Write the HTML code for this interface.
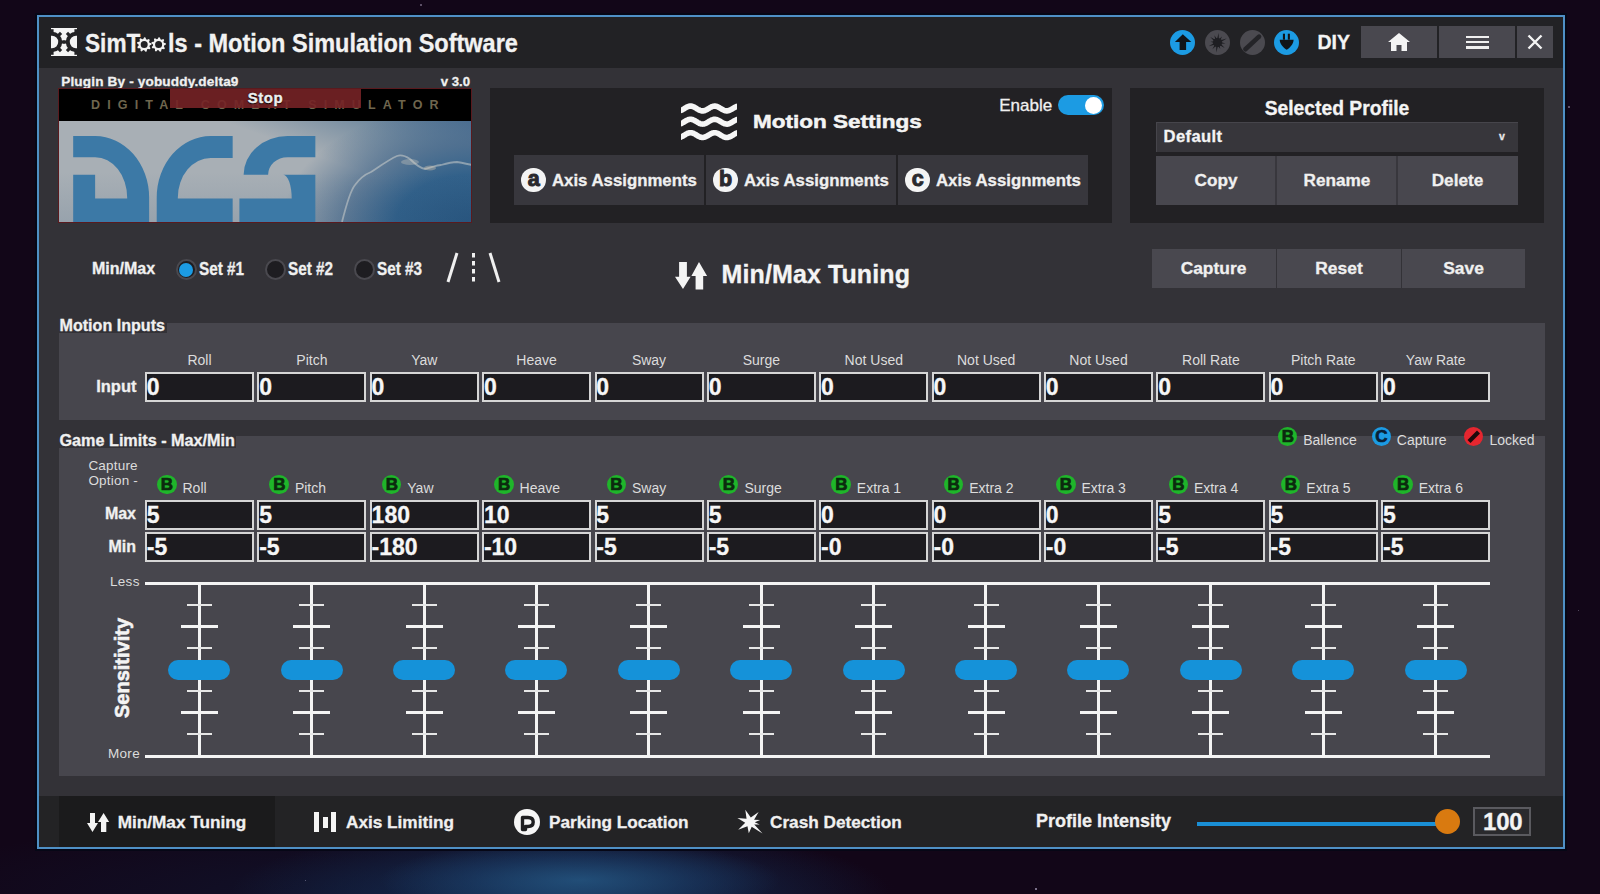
<!DOCTYPE html><html><head><meta charset="utf-8"><style>
html,body{margin:0;padding:0;width:1600px;height:894px;overflow:hidden;background:#120618;}
body{position:relative;font-family:"Liberation Sans",sans-serif;}
.t{position:absolute;white-space:nowrap;}
.b{-webkit-text-stroke:0.3px currentColor;}
.r{position:absolute;}
svg{position:absolute;overflow:visible;}
</style></head><body>
<div class="r" style="left:0;top:0;width:1600px;height:894px;background:radial-gradient(ellipse 200px 40px at 580px 880px,rgba(38,90,135,.75) 0%,rgba(30,70,115,.45) 55%,rgba(20,40,80,0) 100%),radial-gradient(ellipse 330px 70px at 560px 894px,rgba(22,52,88,.9) 0%,rgba(20,42,78,.6) 50%,rgba(16,12,36,0) 100%),radial-gradient(ellipse 500px 80px at 400px 894px,rgba(16,22,48,.8) 0%,rgba(16,12,36,0) 100%),#120618;"></div>
<div class="r" style="left:1568px;top:106px;width:1.5px;height:1.5px;border-radius:50%;background:rgba(220,210,240,0.44);"></div><div class="r" style="left:1035px;top:888px;width:1.5px;height:1.5px;border-radius:50%;background:rgba(220,210,240,0.62);"></div><div class="r" style="left:1578px;top:610px;width:1px;height:1px;border-radius:50%;background:rgba(220,210,240,0.42);"></div><div class="r" style="left:420px;top:4px;width:1.5px;height:1.5px;border-radius:50%;background:rgba(220,210,240,0.44);"></div><div class="r" style="left:305px;top:880px;width:1px;height:1px;border-radius:50%;background:rgba(220,210,240,0.45);"></div>
<div class="r" style="left:35px;top:13px;width:1532px;height:838px;background:#060716;"></div>
<div class="r" style="left:37px;top:15px;width:1528px;height:834px;background:#4f90c6;"></div>
<div class="r" style="left:39px;top:17px;width:1524px;height:830px;background:#333237;"></div>
<div class="r" style="left:39px;top:17px;width:1524px;height:51px;background:#222225;"></div>
<div class="r" style="left:39px;top:796px;width:1524px;height:51px;background:#232325;"></div>
<svg style="left:50.6px;top:28px" width="26" height="28" viewBox="0 0 26 28"><defs><clipPath id="lc"><rect x="0" y="0" width="26" height="28"/></clipPath></defs><g clip-path="url(#lc)"><rect x="0" y="0" width="26" height="28" fill="#f4f4f4"/><circle cx="1" cy="14" r="8.2" stroke="#222225" stroke-width="4" fill="none"/><circle cx="25" cy="14" r="8.2" stroke="#222225" stroke-width="4" fill="none"/><path d="M1.00 5.00 L1.00 1.20" stroke="#222225" stroke-width="3.2"/><path d="M7.36 7.64 L10.05 4.95" stroke="#222225" stroke-width="3.2"/><path d="M10.00 14.00 L13.80 14.00" stroke="#222225" stroke-width="3.2"/><path d="M7.36 20.36 L10.05 23.05" stroke="#222225" stroke-width="3.2"/><path d="M1.00 23.00 L1.00 26.80" stroke="#222225" stroke-width="3.2"/><path d="M25.00 23.00 L25.00 26.80" stroke="#222225" stroke-width="3.2"/><path d="M18.64 20.36 L15.95 23.05" stroke="#222225" stroke-width="3.2"/><path d="M16.00 14.00 L12.20 14.00" stroke="#222225" stroke-width="3.2"/><path d="M18.64 7.64 L15.95 4.95" stroke="#222225" stroke-width="3.2"/><path d="M25.00 5.00 L25.00 1.20" stroke="#222225" stroke-width="3.2"/></g></svg>
<div class="t b" style="left:84.5px;top:30.7px;font-size:25px;line-height:25px;font-weight:700;color:#f2f2f2;letter-spacing:0px;transform:scaleX(0.905);transform-origin:0 0;">SimT</div>
<svg style="left:130px;top:30px" width="50" height="30" viewBox="0 0 50 30"><path d="M14.20,7.30 L15.47,7.41 L16.12,9.34 L17.00,9.75 L18.89,9.01 L19.79,9.91 L19.05,11.80 L19.46,12.68 L21.39,13.33 L21.50,14.60 L19.71,15.57 L19.46,16.52 L20.52,18.25 L19.79,19.29 L17.80,18.89 L17.00,19.45 L16.70,21.46 L15.47,21.79 L14.20,20.20 L13.23,20.11 L11.70,21.46 L10.55,20.92 L10.60,18.89 L9.91,18.20 L7.88,18.25 L7.34,17.10 L8.69,15.57 L8.60,14.60 L7.01,13.33 L7.34,12.10 L9.35,11.80 L9.91,11.00 L9.51,9.01 L10.55,8.28 L12.28,9.34 L13.23,9.09 Z M17.70,14.60 A3.5,3.5 0 1 0 10.70,14.60 A3.5,3.5 0 1 0 17.70,14.60 Z" fill="#f2f2f2" fill-rule="evenodd"/><path d="M28.60,7.30 L29.87,7.41 L30.52,9.34 L31.40,9.75 L33.29,9.01 L34.19,9.91 L33.45,11.80 L33.86,12.68 L35.79,13.33 L35.90,14.60 L34.11,15.57 L33.86,16.52 L34.92,18.25 L34.19,19.29 L32.20,18.89 L31.40,19.45 L31.10,21.46 L29.87,21.79 L28.60,20.20 L27.63,20.11 L26.10,21.46 L24.95,20.92 L25.00,18.89 L24.31,18.20 L22.28,18.25 L21.74,17.10 L23.09,15.57 L23.00,14.60 L21.41,13.33 L21.74,12.10 L23.75,11.80 L24.31,11.00 L23.91,9.01 L24.95,8.28 L26.68,9.34 L27.63,9.09 Z M32.10,14.60 A3.5,3.5 0 1 0 25.10,14.60 A3.5,3.5 0 1 0 32.10,14.60 Z" fill="#f2f2f2" fill-rule="evenodd"/></svg>
<div class="t b" style="left:167.8px;top:30.7px;font-size:25px;line-height:25px;font-weight:700;color:#f2f2f2;letter-spacing:0px;transform:scaleX(0.940);transform-origin:0 0;">ls - Motion Simulation Software</div>
<svg style="left:1170.1px;top:29.700000000000003px" width="25" height="25" viewBox="0 0 25 25"><circle cx="12.5" cy="12.5" r="12.5" fill="#1c9be3"/><path d="M12.8 4.2 L21.3 12 H16.1 V19.9 H9.6 V12 H4.9 Z" fill="#101418"/></svg>
<svg style="left:1205.4px;top:29.6px" width="25" height="25" viewBox="0 0 25 25"><circle cx="12.5" cy="12.5" r="12.5" fill="#4b4a50"/><path d="M13.66,3.07 L13.85,9.16 L17.01,6.51 L15.34,10.28 L21.71,8.59 L16.06,12.00 L20.44,13.47 L15.84,13.85 L19.69,17.92 L14.72,15.34 L15.24,18.94 L13.00,16.06 L11.28,22.43 L11.15,15.84 L7.38,19.29 L9.66,14.72 L3.76,16.21 L8.94,13.00 L5.55,11.65 L9.16,11.15 L5.31,7.08 L10.28,9.66 L9.37,5.14 L12.00,8.94 Z" fill="#1e1e22"/><circle cx="12.5" cy="12.5" r="4.5" fill="#1e1e22"/></svg>
<svg style="left:1239.9px;top:29.700000000000003px" width="25" height="25" viewBox="0 0 25 25"><circle cx="12.5" cy="12.5" r="12.5" fill="#4b4a50"/><path d="M5.4 19.3 L19 6.6" stroke="#242428" stroke-width="4.6" stroke-linecap="round"/></svg>
<svg style="left:1274.4px;top:29.700000000000003px" width="25" height="25" viewBox="0 0 25 25"><circle cx="12.5" cy="12.5" r="12.5" fill="#1c9be3"/><rect x="8.9" y="3.7" width="2.1" height="6" fill="#101418"/><rect x="13.8" y="3.7" width="2.1" height="6" fill="#101418"/><path d="M5.7 9.7 H19.6 C19.6 14 16 17.5 12.7 19.8 C9.4 17.5 5.7 14 5.7 9.7 Z" fill="#101418"/></svg>
<div class="t b" style="left:1317.5px;top:33.0px;font-size:19.5px;line-height:19.5px;font-weight:700;color:#f4f4f4;letter-spacing:0px;">DIY</div>
<div class="r" style="left:1361px;top:26px;width:76px;height:32px;background:#49484f;"></div>
<div class="r" style="left:1439px;top:26px;width:76px;height:32px;background:#49484f;"></div>
<div class="r" style="left:1517px;top:26px;width:36px;height:32px;background:#49484f;"></div>
<svg style="left:1388px;top:33px" width="22" height="18" viewBox="0 0 22 18"><path d="M11 0 L22 9 L19 9 L19 18 L13.5 18 L13.5 12 L8.5 12 L8.5 18 L3 18 L3 9 L0 9 Z" fill="#f4f4f4"/></svg>
<div class="r" style="left:1466px;top:35.5px;width:23px;height:2.5px;background:#f0f0f0;"></div>
<div class="r" style="left:1466px;top:40.7px;width:23px;height:2.5px;background:#f0f0f0;"></div>
<div class="r" style="left:1466px;top:46px;width:23px;height:2.5px;background:#f0f0f0;"></div>
<svg style="left:1528px;top:35px" width="14" height="14" viewBox="0 0 14 14"><path d="M0.5 0.5 L13.5 13.5 M13.5 0.5 L0.5 13.5" stroke="#f4f4f4" stroke-width="2.4"/></svg>
<div class="t b" style="left:61.2px;top:74.7px;font-size:13.6px;line-height:13.6px;font-weight:700;color:#f0f0f0;letter-spacing:0.15px;">Plugin By - yobuddy.delta9</div>
<div class="t b" style="left:70.0px;width:400px;text-align:right;top:75.0px;font-size:13.2px;line-height:13.2px;font-weight:700;color:#f0f0f0;letter-spacing:0px;">v 3.0</div>
<div class="r" style="left:58px;top:88px;width:414px;height:135px;background:#000;overflow:hidden;">
<div class="r" style="left:0;top:33px;width:414px;height:102px;background:radial-gradient(ellipse 190px 120px at 414px 102px,#2a5780 0%,#32618a 40%,rgba(70,105,140,.75) 65%,rgba(150,165,178,0) 100%),linear-gradient(200deg,rgba(60,100,140,.85) 0%,rgba(80,115,145,.5) 18%,rgba(168,175,181,0) 36%),#a8afb5;"></div>
<div class="r" style="left:0;top:33px;width:414px;height:102px;background:linear-gradient(180deg,rgba(40,80,120,0) 0%,rgba(40,80,120,0) 50%,rgba(30,70,110,.12) 100%);"></div>
<svg style="left:0;top:33px" width="414" height="102" viewBox="0 0 414 102"><path d="M284 101 C288 85 292 70 297 64 C302 57 308 53 313 51 C322 45 332 38 339 35 C344 33 349 36 352 38 C357 43 362 47 367 48 C373 47 378 44 383 44 C390 42 395 41 399 41 C405 42 409 43 414 44" stroke="rgba(215,215,210,.5)" stroke-width="1.8" fill="none"/><ellipse cx="352" cy="41" rx="9" ry="3" fill="rgba(225,215,200,.3)"/><ellipse cx="372" cy="47" rx="6" ry="2.5" fill="rgba(225,205,180,.35)"/></svg>
<svg style="left:0;top:32px" width="270" height="104" viewBox="0 0 1600 616"><g fill="#3c79a6"><path d="M90,95 L220,95 A320,365 0 0 1 540,460 L540,640 L90,640 L90,325 L220,325 L220,465 L410,465 L410,460 A190,240 0 0 0 220,220 L90,220 Z"/><path d="M1035,95 L905,95 A320,365 0 0 0 585,460 L585,640 L1035,640 L1035,465 L710,465 L710,460 A195,235 0 0 1 905,225 L1035,225 Z"/><path d="M1525,95 L1360,95 A260,230 0 0 0 1100,325 L1245,325 A115,105 0 0 1 1360,220 L1525,220 Z"/><path d="M1335,325 L1525,325 L1525,640 L1075,640 L1075,465 L1385,465 A50,140 0 0 0 1335,325 Z"/></g></svg>
<div class="t" style="left:33px;top:10px;font-size:12.5px;line-height:14px;font-weight:700;color:#6f664e;letter-spacing:7.15px;">DIGITAL&#160;COMBAT&#160;SIMULATOR</div>
<div class="r" style="left:112px;top:1px;width:191px;height:18.5px;background:rgba(118,34,38,.9);"></div>
<div class="r" style="left:0;top:0;width:412px;height:133px;border:1px solid #5a1a1e;"></div>
</div>
<div class="t" style="left:65.5px;width:400px;text-align:center;top:89.6px;font-size:15px;line-height:15px;font-weight:700;color:#eeeeee;letter-spacing:0.6px;-webkit-text-stroke:0.4px #eee;text-shadow:0 0 1.5px #000,0 1px 1px #000;">Stop</div>
<div class="r" style="left:490px;top:88px;width:622px;height:135px;background:#222124;"></div>
<svg style="left:681px;top:100px" width="56" height="44" viewBox="0 0 56 44"><defs><clipPath id="wc"><rect x="0" y="0" width="56" height="44"/></clipPath></defs><g clip-path="url(#wc)" transform="translate(0,3)"><polyline points="-3.0,7.89 -2.0,7.87 -1.0,7.70 0.0,7.37 1.0,6.93 2.0,6.38 3.0,5.78 4.0,5.16 5.0,4.56 6.0,4.02 7.0,3.59 8.0,3.28 9.0,3.12 10.0,3.12 11.0,3.28 12.0,3.59 13.0,4.02 14.0,4.56 15.0,5.16 16.0,5.78 17.0,6.38 18.0,6.93 19.0,7.37 20.0,7.70 21.0,7.87 22.0,7.89 23.0,7.74 24.0,7.45 25.0,7.02 26.0,6.50 27.0,5.90 28.0,5.28 29.0,4.68 30.0,4.12 31.0,3.67 32.0,3.33 33.0,3.14 34.0,3.11 35.0,3.24 36.0,3.52 37.0,3.93 38.0,4.45 39.0,5.04 40.0,5.66 41.0,6.27 42.0,6.82 43.0,7.29 44.0,7.64 45.0,7.85 46.0,7.90 47.0,7.78 48.0,7.52 49.0,7.12 50.0,6.61 51.0,6.03 52.0,5.41 53.0,4.79 54.0,4.23 55.0,3.75 56.0,3.39 57.0,3.17 58.0,3.10 59.0,3.20" stroke="#f6f6f6" stroke-width="5.6" fill="none" stroke-linecap="butt" stroke-linejoin="round"/><polyline points="-3.0,21.09 -2.0,21.07 -1.0,20.90 0.0,20.57 1.0,20.13 2.0,19.58 3.0,18.98 4.0,18.36 5.0,17.76 6.0,17.22 7.0,16.79 8.0,16.48 9.0,16.32 10.0,16.32 11.0,16.48 12.0,16.79 13.0,17.22 14.0,17.76 15.0,18.36 16.0,18.98 17.0,19.58 18.0,20.13 19.0,20.57 20.0,20.90 21.0,21.07 22.0,21.09 23.0,20.94 24.0,20.65 25.0,20.22 26.0,19.70 27.0,19.10 28.0,18.48 29.0,17.88 30.0,17.32 31.0,16.87 32.0,16.53 33.0,16.34 34.0,16.31 35.0,16.44 36.0,16.72 37.0,17.13 38.0,17.65 39.0,18.24 40.0,18.86 41.0,19.47 42.0,20.02 43.0,20.49 44.0,20.84 45.0,21.05 46.0,21.10 47.0,20.98 48.0,20.72 49.0,20.32 50.0,19.81 51.0,19.23 52.0,18.61 53.0,17.99 54.0,17.43 55.0,16.95 56.0,16.59 57.0,16.37 58.0,16.30 59.0,16.40" stroke="#f6f6f6" stroke-width="5.6" fill="none" stroke-linecap="butt" stroke-linejoin="round"/><polyline points="-3.0,34.49 -2.0,34.47 -1.0,34.30 0.0,33.97 1.0,33.53 2.0,32.98 3.0,32.38 4.0,31.76 5.0,31.16 6.0,30.62 7.0,30.19 8.0,29.88 9.0,29.72 10.0,29.72 11.0,29.88 12.0,30.19 13.0,30.62 14.0,31.16 15.0,31.76 16.0,32.38 17.0,32.98 18.0,33.53 19.0,33.97 20.0,34.30 21.0,34.47 22.0,34.49 23.0,34.34 24.0,34.05 25.0,33.62 26.0,33.10 27.0,32.50 28.0,31.88 29.0,31.28 30.0,30.72 31.0,30.27 32.0,29.93 33.0,29.74 34.0,29.71 35.0,29.84 36.0,30.12 37.0,30.53 38.0,31.05 39.0,31.64 40.0,32.26 41.0,32.87 42.0,33.42 43.0,33.89 44.0,34.24 45.0,34.45 46.0,34.50 47.0,34.38 48.0,34.12 49.0,33.72 50.0,33.21 51.0,32.63 52.0,32.01 53.0,31.39 54.0,30.83 55.0,30.35 56.0,29.99 57.0,29.77 58.0,29.70 59.0,29.80" stroke="#f6f6f6" stroke-width="5.6" fill="none" stroke-linecap="butt" stroke-linejoin="round"/></g></svg>
<div class="t" style="left:752.5px;top:112.3px;font-size:19px;line-height:19px;font-weight:700;color:#f4f4f4;letter-spacing:0px;transform:scaleX(1.185);transform-origin:0 0;-webkit-text-stroke:0.5px #f4f4f4;">Motion Settings</div>
<div class="t" style="left:999.2px;top:96.8px;font-size:17px;line-height:17px;font-weight:400;color:#f0f0f0;letter-spacing:0px;-webkit-text-stroke:0.3px #f0f0f0;">Enable</div>
<div class="r" style="left:1058px;top:95px;width:46px;height:20px;background:#1c9be3;border-radius:10px;"></div>
<div class="r" style="left:1084.5px;top:96.5px;width:17px;height:17px;border-radius:50%;background:#fff;"></div>
<div class="r" style="left:514px;top:155px;width:190px;height:50px;background:#38373d;"></div>
<div class="r" style="left:521.2px;top:167.7px;width:24.6px;height:24.6px;border-radius:50%;background:#f4f4f4;"></div>
<div class="t" style="left:333.7px;width:400px;text-align:center;top:169.4px;font-size:21.5px;line-height:21.5px;font-weight:700;color:#2a292e;letter-spacing:0px;-webkit-text-stroke:1px #2a292e;">a</div>
<div class="t b" style="left:552.0px;top:172.6px;font-size:16.8px;line-height:16.8px;font-weight:700;color:#f0f0f0;letter-spacing:0px;">Axis Assignments</div>
<div class="r" style="left:706px;top:155px;width:190px;height:50px;background:#38373d;"></div>
<div class="r" style="left:713.2px;top:167.7px;width:24.6px;height:24.6px;border-radius:50%;background:#f4f4f4;"></div>
<div class="t" style="left:525.7px;width:400px;text-align:center;top:169.4px;font-size:21.5px;line-height:21.5px;font-weight:700;color:#2a292e;letter-spacing:0px;-webkit-text-stroke:1px #2a292e;">b</div>
<div class="t b" style="left:744.0px;top:172.6px;font-size:16.8px;line-height:16.8px;font-weight:700;color:#f0f0f0;letter-spacing:0px;">Axis Assignments</div>
<div class="r" style="left:898px;top:155px;width:190px;height:50px;background:#38373d;"></div>
<div class="r" style="left:905.2px;top:167.7px;width:24.6px;height:24.6px;border-radius:50%;background:#f4f4f4;"></div>
<div class="t" style="left:717.7px;width:400px;text-align:center;top:169.4px;font-size:21.5px;line-height:21.5px;font-weight:700;color:#2a292e;letter-spacing:0px;-webkit-text-stroke:1px #2a292e;">c</div>
<div class="t b" style="left:936.0px;top:172.6px;font-size:16.8px;line-height:16.8px;font-weight:700;color:#f0f0f0;letter-spacing:0px;">Axis Assignments</div>
<div class="r" style="left:1130px;top:88px;width:414px;height:135px;background:#222124;"></div>
<div class="t b" style="left:1137.0px;width:400px;text-align:center;top:99.3px;font-size:19.3px;line-height:19.3px;font-weight:700;color:#f4f4f4;letter-spacing:0px;">Selected Profile</div>
<div class="r" style="left:1156px;top:122px;width:362px;height:30px;background:#37363b;box-shadow:inset 1px 1px 0 #46454b;"></div>
<div class="t b" style="left:1163.6px;top:129.4px;font-size:16.6px;line-height:16.6px;font-weight:700;color:#f4f4f4;letter-spacing:0.35px;">Default</div>
<div class="t b" style="left:1499.0px;top:130.7px;font-size:10.5px;line-height:10.5px;font-weight:700;color:#e8e8e8;letter-spacing:0px;">v</div>
<div class="r" style="left:1156px;top:156px;width:362px;height:49px;background:#48474e;"></div>
<div class="r" style="left:1275px;top:156px;width:2px;height:49px;background:#38373d;"></div>
<div class="r" style="left:1396px;top:156px;width:2px;height:49px;background:#38373d;"></div>
<div class="t b" style="left:1016.0px;width:400px;text-align:center;top:172.3px;font-size:17.2px;line-height:17.2px;font-weight:700;color:#f0f0f0;letter-spacing:0px;">Copy</div>
<div class="t b" style="left:1137.0px;width:400px;text-align:center;top:172.3px;font-size:17.2px;line-height:17.2px;font-weight:700;color:#f0f0f0;letter-spacing:0px;">Rename</div>
<div class="t b" style="left:1257.5px;width:400px;text-align:center;top:172.3px;font-size:17.2px;line-height:17.2px;font-weight:700;color:#f0f0f0;letter-spacing:0px;">Delete</div>
<div class="t b" style="left:92.0px;top:261.0px;font-size:16px;line-height:16px;font-weight:700;color:#f0f0f0;letter-spacing:0px;">Min/Max</div>
<div class="r" style="left:175.7px;top:259.1px;width:17px;height:17px;border-radius:50%;background:#1e1d21;border:2px solid #4a494f;"></div>
<div class="r" style="left:179.2px;top:262.6px;width:14px;height:14px;border-radius:50%;background:#1c9be3;"></div>
<div class="r" style="left:264.5px;top:259.1px;width:17px;height:17px;border-radius:50%;background:#1e1d21;border:2px solid #4a494f;"></div>
<div class="r" style="left:353.5px;top:259.1px;width:17px;height:17px;border-radius:50%;background:#1e1d21;border:2px solid #4a494f;"></div>
<div class="t b" style="left:199.2px;top:260.4px;font-size:18px;line-height:18px;font-weight:700;color:#f0f0f0;letter-spacing:0px;transform:scaleX(0.85);transform-origin:0 0;">Set #1</div>
<div class="t b" style="left:288.0px;top:260.4px;font-size:18px;line-height:18px;font-weight:700;color:#f0f0f0;letter-spacing:0px;transform:scaleX(0.85);transform-origin:0 0;">Set #2</div>
<div class="t b" style="left:377.0px;top:260.4px;font-size:18px;line-height:18px;font-weight:700;color:#f0f0f0;letter-spacing:0px;transform:scaleX(0.85);transform-origin:0 0;">Set #3</div>
<svg style="left:444px;top:252px" width="60" height="32" viewBox="0 0 60 32"><path d="M13 1 L4 30" stroke="#f0f0f0" stroke-width="3"/><path d="M29.5 1 L29.5 30" stroke="#f0f0f0" stroke-width="3" stroke-dasharray="4.5 3.5"/><path d="M46 1 L55 30" stroke="#f0f0f0" stroke-width="3"/></svg>
<svg style="left:674.8px;top:261.5px" width="32.2" height="27.5" viewBox="0 0 32.2 27.5"><path d="M4.1 0 H11.9 V14.7 H15.6 L8 27 L0 14.7 H4.1 Z" fill="#f4f4f4"/><path d="M24 0 L32.1 13.9 H28.2 V27.4 H20.6 V13.9 H16.4 Z" fill="#f4f4f4"/></svg>
<div class="t b" style="left:721.6px;top:262.3px;font-size:25px;line-height:25px;font-weight:700;color:#f4f4f4;letter-spacing:0.1px;">Min/Max Tuning</div>
<div class="r" style="left:1152px;top:249px;width:124px;height:39px;background:#49484f;"></div>
<div class="r" style="left:1277px;top:249px;width:124px;height:39px;background:#49484f;"></div>
<div class="r" style="left:1402px;top:249px;width:123px;height:39px;background:#49484f;"></div>
<div class="t b" style="left:1013.5px;width:400px;text-align:center;top:259.9px;font-size:17.4px;line-height:17.4px;font-weight:700;color:#f0f0f0;letter-spacing:0px;">Capture</div>
<div class="t b" style="left:1139.0px;width:400px;text-align:center;top:259.9px;font-size:17.4px;line-height:17.4px;font-weight:700;color:#f0f0f0;letter-spacing:0px;">Reset</div>
<div class="t b" style="left:1263.5px;width:400px;text-align:center;top:259.9px;font-size:17.4px;line-height:17.4px;font-weight:700;color:#f0f0f0;letter-spacing:0px;">Save</div>
<div class="r" style="left:59px;top:323px;width:1486px;height:97px;background:#47464d;"></div>
<div class="r" style="left:59px;top:322px;width:108px;height:11px;background:#333237;"></div>
<div class="t b" style="left:59.5px;top:317.1px;font-size:16.1px;line-height:16.1px;font-weight:700;color:#f0f0f0;letter-spacing:0px;">Motion Inputs</div>
<div class="t" style="left:-0.5px;width:400px;text-align:center;top:352.6px;font-size:14px;line-height:14px;font-weight:400;color:#dcdcdc;letter-spacing:0px;">Roll</div>
<div class="r" style="left:145.0px;top:372px;width:105px;height:26px;background:#1c1b1f;border:2px solid #d6d6d6;"></div>
<div class="t b" style="left:146.8px;top:376.3px;font-size:23px;line-height:23px;font-weight:700;color:#f6f6f6;letter-spacing:0px;">0</div>
<div class="t" style="left:111.9px;width:400px;text-align:center;top:352.6px;font-size:14px;line-height:14px;font-weight:400;color:#dcdcdc;letter-spacing:0px;">Pitch</div>
<div class="r" style="left:257.4px;top:372px;width:105px;height:26px;background:#1c1b1f;border:2px solid #d6d6d6;"></div>
<div class="t b" style="left:259.2px;top:376.3px;font-size:23px;line-height:23px;font-weight:700;color:#f6f6f6;letter-spacing:0px;">0</div>
<div class="t" style="left:224.3px;width:400px;text-align:center;top:352.6px;font-size:14px;line-height:14px;font-weight:400;color:#dcdcdc;letter-spacing:0px;">Yaw</div>
<div class="r" style="left:369.8px;top:372px;width:105px;height:26px;background:#1c1b1f;border:2px solid #d6d6d6;"></div>
<div class="t b" style="left:371.6px;top:376.3px;font-size:23px;line-height:23px;font-weight:700;color:#f6f6f6;letter-spacing:0px;">0</div>
<div class="t" style="left:336.6px;width:400px;text-align:center;top:352.6px;font-size:14px;line-height:14px;font-weight:400;color:#dcdcdc;letter-spacing:0px;">Heave</div>
<div class="r" style="left:482.1px;top:372px;width:105px;height:26px;background:#1c1b1f;border:2px solid #d6d6d6;"></div>
<div class="t b" style="left:483.9px;top:376.3px;font-size:23px;line-height:23px;font-weight:700;color:#f6f6f6;letter-spacing:0px;">0</div>
<div class="t" style="left:449.0px;width:400px;text-align:center;top:352.6px;font-size:14px;line-height:14px;font-weight:400;color:#dcdcdc;letter-spacing:0px;">Sway</div>
<div class="r" style="left:594.5px;top:372px;width:105px;height:26px;background:#1c1b1f;border:2px solid #d6d6d6;"></div>
<div class="t b" style="left:596.3px;top:376.3px;font-size:23px;line-height:23px;font-weight:700;color:#f6f6f6;letter-spacing:0px;">0</div>
<div class="t" style="left:561.4px;width:400px;text-align:center;top:352.6px;font-size:14px;line-height:14px;font-weight:400;color:#dcdcdc;letter-spacing:0px;">Surge</div>
<div class="r" style="left:706.9px;top:372px;width:105px;height:26px;background:#1c1b1f;border:2px solid #d6d6d6;"></div>
<div class="t b" style="left:708.7px;top:376.3px;font-size:23px;line-height:23px;font-weight:700;color:#f6f6f6;letter-spacing:0px;">0</div>
<div class="t" style="left:673.8px;width:400px;text-align:center;top:352.6px;font-size:14px;line-height:14px;font-weight:400;color:#dcdcdc;letter-spacing:0px;">Not Used</div>
<div class="r" style="left:819.3px;top:372px;width:105px;height:26px;background:#1c1b1f;border:2px solid #d6d6d6;"></div>
<div class="t b" style="left:821.1px;top:376.3px;font-size:23px;line-height:23px;font-weight:700;color:#f6f6f6;letter-spacing:0px;">0</div>
<div class="t" style="left:786.2px;width:400px;text-align:center;top:352.6px;font-size:14px;line-height:14px;font-weight:400;color:#dcdcdc;letter-spacing:0px;">Not Used</div>
<div class="r" style="left:931.7px;top:372px;width:105px;height:26px;background:#1c1b1f;border:2px solid #d6d6d6;"></div>
<div class="t b" style="left:933.5px;top:376.3px;font-size:23px;line-height:23px;font-weight:700;color:#f6f6f6;letter-spacing:0px;">0</div>
<div class="t" style="left:898.5px;width:400px;text-align:center;top:352.6px;font-size:14px;line-height:14px;font-weight:400;color:#dcdcdc;letter-spacing:0px;">Not Used</div>
<div class="r" style="left:1044.0px;top:372px;width:105px;height:26px;background:#1c1b1f;border:2px solid #d6d6d6;"></div>
<div class="t b" style="left:1045.8px;top:376.3px;font-size:23px;line-height:23px;font-weight:700;color:#f6f6f6;letter-spacing:0px;">0</div>
<div class="t" style="left:1010.9px;width:400px;text-align:center;top:352.6px;font-size:14px;line-height:14px;font-weight:400;color:#dcdcdc;letter-spacing:0px;">Roll Rate</div>
<div class="r" style="left:1156.4px;top:372px;width:105px;height:26px;background:#1c1b1f;border:2px solid #d6d6d6;"></div>
<div class="t b" style="left:1158.2px;top:376.3px;font-size:23px;line-height:23px;font-weight:700;color:#f6f6f6;letter-spacing:0px;">0</div>
<div class="t" style="left:1123.3px;width:400px;text-align:center;top:352.6px;font-size:14px;line-height:14px;font-weight:400;color:#dcdcdc;letter-spacing:0px;">Pitch Rate</div>
<div class="r" style="left:1268.8px;top:372px;width:105px;height:26px;background:#1c1b1f;border:2px solid #d6d6d6;"></div>
<div class="t b" style="left:1270.6px;top:376.3px;font-size:23px;line-height:23px;font-weight:700;color:#f6f6f6;letter-spacing:0px;">0</div>
<div class="t" style="left:1235.7px;width:400px;text-align:center;top:352.6px;font-size:14px;line-height:14px;font-weight:400;color:#dcdcdc;letter-spacing:0px;">Yaw Rate</div>
<div class="r" style="left:1381.2px;top:372px;width:105px;height:26px;background:#1c1b1f;border:2px solid #d6d6d6;"></div>
<div class="t b" style="left:1383.0px;top:376.3px;font-size:23px;line-height:23px;font-weight:700;color:#f6f6f6;letter-spacing:0px;">0</div>
<div class="t b" style="left:-263.5px;width:400px;text-align:right;top:377.8px;font-size:16.5px;line-height:16.5px;font-weight:700;color:#f0f0f0;letter-spacing:0px;">Input</div>
<div class="r" style="left:59px;top:436px;width:1486px;height:340px;background:#47464d;"></div>
<div class="r" style="left:59px;top:430px;width:177px;height:18px;background:#333237;"></div>
<div class="t b" style="left:59.5px;top:431.6px;font-size:16.2px;line-height:16.2px;font-weight:700;color:#f0f0f0;letter-spacing:0px;">Game Limits - Max/Min</div>
<div class="r" style="left:1277.8px;top:426.6px;width:19.5px;height:19.5px;border-radius:50%;background:#1fb52a;"></div>
<div class="t" style="left:1087.8px;width:400px;text-align:center;top:427.9px;font-size:17px;line-height:17px;font-weight:700;color:#0b2a0e;letter-spacing:0px;-webkit-text-stroke:0.7px #0b2a0e;">B</div>
<div class="t" style="left:1303.2px;top:433.4px;font-size:14px;line-height:14px;font-weight:400;color:#dcdcdc;letter-spacing:0px;">Ballence</div>
<div class="r" style="left:1371.5px;top:426.6px;width:19.5px;height:19.5px;border-radius:50%;background:#1c9be3;"></div>
<div class="t" style="left:1181.4px;width:400px;text-align:center;top:427.9px;font-size:17px;line-height:17px;font-weight:700;color:#082036;letter-spacing:0px;-webkit-text-stroke:0.7px #082036;">C</div>
<div class="t" style="left:1396.8px;top:433.4px;font-size:14px;line-height:14px;font-weight:400;color:#dcdcdc;letter-spacing:0px;">Capture</div>
<div class="r" style="left:1463.5px;top:426.5px;width:19.5px;height:19.5px;border-radius:50%;background:#e5262f;"></div>
<svg style="left:1463.5px;top:426.5px" width="19.5" height="19.5" viewBox="0 0 19.5 19.5"><path d="M5 14.5 L14.5 5" stroke="#1e0a0c" stroke-width="4.2" stroke-linecap="butt"/></svg>
<div class="t" style="left:1489.5px;top:433.4px;font-size:14px;line-height:14px;font-weight:400;color:#dcdcdc;letter-spacing:0px;">Locked</div>
<div class="t" style="left:88.4px;top:459.1px;font-size:13.5px;line-height:13.5px;font-weight:400;color:#dcdcdc;letter-spacing:0.2px;">Capture</div>
<div class="t" style="left:88.4px;top:474.2px;font-size:13.5px;line-height:13.5px;font-weight:400;color:#dcdcdc;letter-spacing:0.2px;">Option -</div>
<div class="r" style="left:157.1px;top:474.6px;width:19.5px;height:19.5px;border-radius:50%;background:#1fb52a;"></div>
<div class="t" style="left:-33.0px;width:400px;text-align:center;top:475.9px;font-size:17px;line-height:17px;font-weight:700;color:#0b2a0e;letter-spacing:0px;-webkit-text-stroke:0.7px #0b2a0e;">B</div>
<div class="t" style="left:182.5px;top:481.2px;font-size:14px;line-height:14px;font-weight:400;color:#dcdcdc;letter-spacing:0px;">Roll</div>
<div class="r" style="left:145.0px;top:500px;width:105px;height:26px;background:#1c1b1f;border:2px solid #d6d6d6;"></div>
<div class="t b" style="left:146.8px;top:504.3px;font-size:23px;line-height:23px;font-weight:700;color:#f6f6f6;letter-spacing:0px;">5</div>
<div class="r" style="left:145.0px;top:532px;width:105px;height:26px;background:#1c1b1f;border:2px solid #d6d6d6;"></div>
<div class="t b" style="left:146.8px;top:536.3px;font-size:23px;line-height:23px;font-weight:700;color:#f6f6f6;letter-spacing:0px;">-5</div>
<div class="r" style="left:269.4px;top:474.6px;width:19.5px;height:19.5px;border-radius:50%;background:#1fb52a;"></div>
<div class="t" style="left:79.4px;width:400px;text-align:center;top:475.9px;font-size:17px;line-height:17px;font-weight:700;color:#0b2a0e;letter-spacing:0px;-webkit-text-stroke:0.7px #0b2a0e;">B</div>
<div class="t" style="left:294.9px;top:481.2px;font-size:14px;line-height:14px;font-weight:400;color:#dcdcdc;letter-spacing:0px;">Pitch</div>
<div class="r" style="left:257.4px;top:500px;width:105px;height:26px;background:#1c1b1f;border:2px solid #d6d6d6;"></div>
<div class="t b" style="left:259.2px;top:504.3px;font-size:23px;line-height:23px;font-weight:700;color:#f6f6f6;letter-spacing:0px;">5</div>
<div class="r" style="left:257.4px;top:532px;width:105px;height:26px;background:#1c1b1f;border:2px solid #d6d6d6;"></div>
<div class="t b" style="left:259.2px;top:536.3px;font-size:23px;line-height:23px;font-weight:700;color:#f6f6f6;letter-spacing:0px;">-5</div>
<div class="r" style="left:381.8px;top:474.6px;width:19.5px;height:19.5px;border-radius:50%;background:#1fb52a;"></div>
<div class="t" style="left:191.8px;width:400px;text-align:center;top:475.9px;font-size:17px;line-height:17px;font-weight:700;color:#0b2a0e;letter-spacing:0px;-webkit-text-stroke:0.7px #0b2a0e;">B</div>
<div class="t" style="left:407.3px;top:481.2px;font-size:14px;line-height:14px;font-weight:400;color:#dcdcdc;letter-spacing:0px;">Yaw</div>
<div class="r" style="left:369.8px;top:500px;width:105px;height:26px;background:#1c1b1f;border:2px solid #d6d6d6;"></div>
<div class="t b" style="left:371.6px;top:504.3px;font-size:23px;line-height:23px;font-weight:700;color:#f6f6f6;letter-spacing:0px;">180</div>
<div class="r" style="left:369.8px;top:532px;width:105px;height:26px;background:#1c1b1f;border:2px solid #d6d6d6;"></div>
<div class="t b" style="left:371.6px;top:536.3px;font-size:23px;line-height:23px;font-weight:700;color:#f6f6f6;letter-spacing:0px;">-180</div>
<div class="r" style="left:494.2px;top:474.6px;width:19.5px;height:19.5px;border-radius:50%;background:#1fb52a;"></div>
<div class="t" style="left:304.1px;width:400px;text-align:center;top:475.9px;font-size:17px;line-height:17px;font-weight:700;color:#0b2a0e;letter-spacing:0px;-webkit-text-stroke:0.7px #0b2a0e;">B</div>
<div class="t" style="left:519.6px;top:481.2px;font-size:14px;line-height:14px;font-weight:400;color:#dcdcdc;letter-spacing:0px;">Heave</div>
<div class="r" style="left:482.1px;top:500px;width:105px;height:26px;background:#1c1b1f;border:2px solid #d6d6d6;"></div>
<div class="t b" style="left:483.9px;top:504.3px;font-size:23px;line-height:23px;font-weight:700;color:#f6f6f6;letter-spacing:0px;">10</div>
<div class="r" style="left:482.1px;top:532px;width:105px;height:26px;background:#1c1b1f;border:2px solid #d6d6d6;"></div>
<div class="t b" style="left:483.9px;top:536.3px;font-size:23px;line-height:23px;font-weight:700;color:#f6f6f6;letter-spacing:0px;">-10</div>
<div class="r" style="left:606.6px;top:474.6px;width:19.5px;height:19.5px;border-radius:50%;background:#1fb52a;"></div>
<div class="t" style="left:416.5px;width:400px;text-align:center;top:475.9px;font-size:17px;line-height:17px;font-weight:700;color:#0b2a0e;letter-spacing:0px;-webkit-text-stroke:0.7px #0b2a0e;">B</div>
<div class="t" style="left:632.0px;top:481.2px;font-size:14px;line-height:14px;font-weight:400;color:#dcdcdc;letter-spacing:0px;">Sway</div>
<div class="r" style="left:594.5px;top:500px;width:105px;height:26px;background:#1c1b1f;border:2px solid #d6d6d6;"></div>
<div class="t b" style="left:596.3px;top:504.3px;font-size:23px;line-height:23px;font-weight:700;color:#f6f6f6;letter-spacing:0px;">5</div>
<div class="r" style="left:594.5px;top:532px;width:105px;height:26px;background:#1c1b1f;border:2px solid #d6d6d6;"></div>
<div class="t b" style="left:596.3px;top:536.3px;font-size:23px;line-height:23px;font-weight:700;color:#f6f6f6;letter-spacing:0px;">-5</div>
<div class="r" style="left:718.9px;top:474.6px;width:19.5px;height:19.5px;border-radius:50%;background:#1fb52a;"></div>
<div class="t" style="left:528.9px;width:400px;text-align:center;top:475.9px;font-size:17px;line-height:17px;font-weight:700;color:#0b2a0e;letter-spacing:0px;-webkit-text-stroke:0.7px #0b2a0e;">B</div>
<div class="t" style="left:744.4px;top:481.2px;font-size:14px;line-height:14px;font-weight:400;color:#dcdcdc;letter-spacing:0px;">Surge</div>
<div class="r" style="left:706.9px;top:500px;width:105px;height:26px;background:#1c1b1f;border:2px solid #d6d6d6;"></div>
<div class="t b" style="left:708.7px;top:504.3px;font-size:23px;line-height:23px;font-weight:700;color:#f6f6f6;letter-spacing:0px;">5</div>
<div class="r" style="left:706.9px;top:532px;width:105px;height:26px;background:#1c1b1f;border:2px solid #d6d6d6;"></div>
<div class="t b" style="left:708.7px;top:536.3px;font-size:23px;line-height:23px;font-weight:700;color:#f6f6f6;letter-spacing:0px;">-5</div>
<div class="r" style="left:831.3px;top:474.6px;width:19.5px;height:19.5px;border-radius:50%;background:#1fb52a;"></div>
<div class="t" style="left:641.3px;width:400px;text-align:center;top:475.9px;font-size:17px;line-height:17px;font-weight:700;color:#0b2a0e;letter-spacing:0px;-webkit-text-stroke:0.7px #0b2a0e;">B</div>
<div class="t" style="left:856.8px;top:481.2px;font-size:14px;line-height:14px;font-weight:400;color:#dcdcdc;letter-spacing:0px;">Extra 1</div>
<div class="r" style="left:819.3px;top:500px;width:105px;height:26px;background:#1c1b1f;border:2px solid #d6d6d6;"></div>
<div class="t b" style="left:821.1px;top:504.3px;font-size:23px;line-height:23px;font-weight:700;color:#f6f6f6;letter-spacing:0px;">0</div>
<div class="r" style="left:819.3px;top:532px;width:105px;height:26px;background:#1c1b1f;border:2px solid #d6d6d6;"></div>
<div class="t b" style="left:821.1px;top:536.3px;font-size:23px;line-height:23px;font-weight:700;color:#f6f6f6;letter-spacing:0px;">-0</div>
<div class="r" style="left:943.7px;top:474.6px;width:19.5px;height:19.5px;border-radius:50%;background:#1fb52a;"></div>
<div class="t" style="left:753.7px;width:400px;text-align:center;top:475.9px;font-size:17px;line-height:17px;font-weight:700;color:#0b2a0e;letter-spacing:0px;-webkit-text-stroke:0.7px #0b2a0e;">B</div>
<div class="t" style="left:969.2px;top:481.2px;font-size:14px;line-height:14px;font-weight:400;color:#dcdcdc;letter-spacing:0px;">Extra 2</div>
<div class="r" style="left:931.7px;top:500px;width:105px;height:26px;background:#1c1b1f;border:2px solid #d6d6d6;"></div>
<div class="t b" style="left:933.5px;top:504.3px;font-size:23px;line-height:23px;font-weight:700;color:#f6f6f6;letter-spacing:0px;">0</div>
<div class="r" style="left:931.7px;top:532px;width:105px;height:26px;background:#1c1b1f;border:2px solid #d6d6d6;"></div>
<div class="t b" style="left:933.5px;top:536.3px;font-size:23px;line-height:23px;font-weight:700;color:#f6f6f6;letter-spacing:0px;">-0</div>
<div class="r" style="left:1056.1px;top:474.6px;width:19.5px;height:19.5px;border-radius:50%;background:#1fb52a;"></div>
<div class="t" style="left:866.0px;width:400px;text-align:center;top:475.9px;font-size:17px;line-height:17px;font-weight:700;color:#0b2a0e;letter-spacing:0px;-webkit-text-stroke:0.7px #0b2a0e;">B</div>
<div class="t" style="left:1081.5px;top:481.2px;font-size:14px;line-height:14px;font-weight:400;color:#dcdcdc;letter-spacing:0px;">Extra 3</div>
<div class="r" style="left:1044.0px;top:500px;width:105px;height:26px;background:#1c1b1f;border:2px solid #d6d6d6;"></div>
<div class="t b" style="left:1045.8px;top:504.3px;font-size:23px;line-height:23px;font-weight:700;color:#f6f6f6;letter-spacing:0px;">0</div>
<div class="r" style="left:1044.0px;top:532px;width:105px;height:26px;background:#1c1b1f;border:2px solid #d6d6d6;"></div>
<div class="t b" style="left:1045.8px;top:536.3px;font-size:23px;line-height:23px;font-weight:700;color:#f6f6f6;letter-spacing:0px;">-0</div>
<div class="r" style="left:1168.5px;top:474.6px;width:19.5px;height:19.5px;border-radius:50%;background:#1fb52a;"></div>
<div class="t" style="left:978.4px;width:400px;text-align:center;top:475.9px;font-size:17px;line-height:17px;font-weight:700;color:#0b2a0e;letter-spacing:0px;-webkit-text-stroke:0.7px #0b2a0e;">B</div>
<div class="t" style="left:1193.9px;top:481.2px;font-size:14px;line-height:14px;font-weight:400;color:#dcdcdc;letter-spacing:0px;">Extra 4</div>
<div class="r" style="left:1156.4px;top:500px;width:105px;height:26px;background:#1c1b1f;border:2px solid #d6d6d6;"></div>
<div class="t b" style="left:1158.2px;top:504.3px;font-size:23px;line-height:23px;font-weight:700;color:#f6f6f6;letter-spacing:0px;">5</div>
<div class="r" style="left:1156.4px;top:532px;width:105px;height:26px;background:#1c1b1f;border:2px solid #d6d6d6;"></div>
<div class="t b" style="left:1158.2px;top:536.3px;font-size:23px;line-height:23px;font-weight:700;color:#f6f6f6;letter-spacing:0px;">-5</div>
<div class="r" style="left:1280.8px;top:474.6px;width:19.5px;height:19.5px;border-radius:50%;background:#1fb52a;"></div>
<div class="t" style="left:1090.8px;width:400px;text-align:center;top:475.9px;font-size:17px;line-height:17px;font-weight:700;color:#0b2a0e;letter-spacing:0px;-webkit-text-stroke:0.7px #0b2a0e;">B</div>
<div class="t" style="left:1306.3px;top:481.2px;font-size:14px;line-height:14px;font-weight:400;color:#dcdcdc;letter-spacing:0px;">Extra 5</div>
<div class="r" style="left:1268.8px;top:500px;width:105px;height:26px;background:#1c1b1f;border:2px solid #d6d6d6;"></div>
<div class="t b" style="left:1270.6px;top:504.3px;font-size:23px;line-height:23px;font-weight:700;color:#f6f6f6;letter-spacing:0px;">5</div>
<div class="r" style="left:1268.8px;top:532px;width:105px;height:26px;background:#1c1b1f;border:2px solid #d6d6d6;"></div>
<div class="t b" style="left:1270.6px;top:536.3px;font-size:23px;line-height:23px;font-weight:700;color:#f6f6f6;letter-spacing:0px;">-5</div>
<div class="r" style="left:1393.2px;top:474.6px;width:19.5px;height:19.5px;border-radius:50%;background:#1fb52a;"></div>
<div class="t" style="left:1203.2px;width:400px;text-align:center;top:475.9px;font-size:17px;line-height:17px;font-weight:700;color:#0b2a0e;letter-spacing:0px;-webkit-text-stroke:0.7px #0b2a0e;">B</div>
<div class="t" style="left:1418.7px;top:481.2px;font-size:14px;line-height:14px;font-weight:400;color:#dcdcdc;letter-spacing:0px;">Extra 6</div>
<div class="r" style="left:1381.2px;top:500px;width:105px;height:26px;background:#1c1b1f;border:2px solid #d6d6d6;"></div>
<div class="t b" style="left:1383.0px;top:504.3px;font-size:23px;line-height:23px;font-weight:700;color:#f6f6f6;letter-spacing:0px;">5</div>
<div class="r" style="left:1381.2px;top:532px;width:105px;height:26px;background:#1c1b1f;border:2px solid #d6d6d6;"></div>
<div class="t b" style="left:1383.0px;top:536.3px;font-size:23px;line-height:23px;font-weight:700;color:#f6f6f6;letter-spacing:0px;">-5</div>
<div class="t b" style="left:-264.0px;width:400px;text-align:right;top:506.1px;font-size:16px;line-height:16px;font-weight:700;color:#f0f0f0;letter-spacing:0px;">Max</div>
<div class="t b" style="left:-264.0px;width:400px;text-align:right;top:538.5px;font-size:16px;line-height:16px;font-weight:700;color:#f0f0f0;letter-spacing:0px;">Min</div>
<div class="t" style="left:110.0px;top:575.3px;font-size:13.5px;line-height:13.5px;font-weight:400;color:#dcdcdc;letter-spacing:0.3px;">Less</div>
<div class="t" style="left:108.0px;top:747.0px;font-size:13.5px;line-height:13.5px;font-weight:400;color:#dcdcdc;letter-spacing:0.3px;">More</div>
<div class="r" style="left:145px;top:582px;width:1345px;height:3px;background:#f4f4f4;"></div>
<div class="r" style="left:145px;top:755px;width:1345px;height:3px;background:#f4f4f4;"></div>
<div class="r" style="left:198px;top:582px;width:3px;height:176px;background:#f4f4f4;"></div>
<div class="r" style="left:186.8px;top:603.7px;width:25px;height:2px;background:#e6e6e6;"></div>
<div class="r" style="left:180.8px;top:624.9px;width:37px;height:3px;background:#f4f4f4;"></div>
<div class="r" style="left:186.8px;top:647.0px;width:25px;height:2px;background:#e6e6e6;"></div>
<div class="r" style="left:186.8px;top:690.3px;width:25px;height:2px;background:#e6e6e6;"></div>
<div class="r" style="left:180.8px;top:711.2px;width:37px;height:3px;background:#f4f4f4;"></div>
<div class="r" style="left:186.8px;top:733.4px;width:25px;height:2px;background:#e6e6e6;"></div>
<div class="r" style="left:168.3px;top:659.5px;width:62px;height:20.5px;border-radius:10px;background:#1592d9;"></div>
<div class="r" style="left:310px;top:582px;width:3px;height:176px;background:#f4f4f4;"></div>
<div class="r" style="left:299.2px;top:603.7px;width:25px;height:2px;background:#e6e6e6;"></div>
<div class="r" style="left:293.2px;top:624.9px;width:37px;height:3px;background:#f4f4f4;"></div>
<div class="r" style="left:299.2px;top:647.0px;width:25px;height:2px;background:#e6e6e6;"></div>
<div class="r" style="left:299.2px;top:690.3px;width:25px;height:2px;background:#e6e6e6;"></div>
<div class="r" style="left:293.2px;top:711.2px;width:37px;height:3px;background:#f4f4f4;"></div>
<div class="r" style="left:299.2px;top:733.4px;width:25px;height:2px;background:#e6e6e6;"></div>
<div class="r" style="left:280.7px;top:659.5px;width:62px;height:20.5px;border-radius:10px;background:#1592d9;"></div>
<div class="r" style="left:423px;top:582px;width:3px;height:176px;background:#f4f4f4;"></div>
<div class="r" style="left:411.6px;top:603.7px;width:25px;height:2px;background:#e6e6e6;"></div>
<div class="r" style="left:405.6px;top:624.9px;width:37px;height:3px;background:#f4f4f4;"></div>
<div class="r" style="left:411.6px;top:647.0px;width:25px;height:2px;background:#e6e6e6;"></div>
<div class="r" style="left:411.6px;top:690.3px;width:25px;height:2px;background:#e6e6e6;"></div>
<div class="r" style="left:405.6px;top:711.2px;width:37px;height:3px;background:#f4f4f4;"></div>
<div class="r" style="left:411.6px;top:733.4px;width:25px;height:2px;background:#e6e6e6;"></div>
<div class="r" style="left:393.1px;top:659.5px;width:62px;height:20.5px;border-radius:10px;background:#1592d9;"></div>
<div class="r" style="left:535px;top:582px;width:3px;height:176px;background:#f4f4f4;"></div>
<div class="r" style="left:523.9px;top:603.7px;width:25px;height:2px;background:#e6e6e6;"></div>
<div class="r" style="left:517.9px;top:624.9px;width:37px;height:3px;background:#f4f4f4;"></div>
<div class="r" style="left:523.9px;top:647.0px;width:25px;height:2px;background:#e6e6e6;"></div>
<div class="r" style="left:523.9px;top:690.3px;width:25px;height:2px;background:#e6e6e6;"></div>
<div class="r" style="left:517.9px;top:711.2px;width:37px;height:3px;background:#f4f4f4;"></div>
<div class="r" style="left:523.9px;top:733.4px;width:25px;height:2px;background:#e6e6e6;"></div>
<div class="r" style="left:505.4px;top:659.5px;width:62px;height:20.5px;border-radius:10px;background:#1592d9;"></div>
<div class="r" style="left:647px;top:582px;width:3px;height:176px;background:#f4f4f4;"></div>
<div class="r" style="left:636.3px;top:603.7px;width:25px;height:2px;background:#e6e6e6;"></div>
<div class="r" style="left:630.3px;top:624.9px;width:37px;height:3px;background:#f4f4f4;"></div>
<div class="r" style="left:636.3px;top:647.0px;width:25px;height:2px;background:#e6e6e6;"></div>
<div class="r" style="left:636.3px;top:690.3px;width:25px;height:2px;background:#e6e6e6;"></div>
<div class="r" style="left:630.3px;top:711.2px;width:37px;height:3px;background:#f4f4f4;"></div>
<div class="r" style="left:636.3px;top:733.4px;width:25px;height:2px;background:#e6e6e6;"></div>
<div class="r" style="left:617.8px;top:659.5px;width:62px;height:20.5px;border-radius:10px;background:#1592d9;"></div>
<div class="r" style="left:760px;top:582px;width:3px;height:176px;background:#f4f4f4;"></div>
<div class="r" style="left:748.7px;top:603.7px;width:25px;height:2px;background:#e6e6e6;"></div>
<div class="r" style="left:742.7px;top:624.9px;width:37px;height:3px;background:#f4f4f4;"></div>
<div class="r" style="left:748.7px;top:647.0px;width:25px;height:2px;background:#e6e6e6;"></div>
<div class="r" style="left:748.7px;top:690.3px;width:25px;height:2px;background:#e6e6e6;"></div>
<div class="r" style="left:742.7px;top:711.2px;width:37px;height:3px;background:#f4f4f4;"></div>
<div class="r" style="left:748.7px;top:733.4px;width:25px;height:2px;background:#e6e6e6;"></div>
<div class="r" style="left:730.2px;top:659.5px;width:62px;height:20.5px;border-radius:10px;background:#1592d9;"></div>
<div class="r" style="left:872px;top:582px;width:3px;height:176px;background:#f4f4f4;"></div>
<div class="r" style="left:861.1px;top:603.7px;width:25px;height:2px;background:#e6e6e6;"></div>
<div class="r" style="left:855.1px;top:624.9px;width:37px;height:3px;background:#f4f4f4;"></div>
<div class="r" style="left:861.1px;top:647.0px;width:25px;height:2px;background:#e6e6e6;"></div>
<div class="r" style="left:861.1px;top:690.3px;width:25px;height:2px;background:#e6e6e6;"></div>
<div class="r" style="left:855.1px;top:711.2px;width:37px;height:3px;background:#f4f4f4;"></div>
<div class="r" style="left:861.1px;top:733.4px;width:25px;height:2px;background:#e6e6e6;"></div>
<div class="r" style="left:842.6px;top:659.5px;width:62px;height:20.5px;border-radius:10px;background:#1592d9;"></div>
<div class="r" style="left:984px;top:582px;width:3px;height:176px;background:#f4f4f4;"></div>
<div class="r" style="left:973.5px;top:603.7px;width:25px;height:2px;background:#e6e6e6;"></div>
<div class="r" style="left:967.5px;top:624.9px;width:37px;height:3px;background:#f4f4f4;"></div>
<div class="r" style="left:973.5px;top:647.0px;width:25px;height:2px;background:#e6e6e6;"></div>
<div class="r" style="left:973.5px;top:690.3px;width:25px;height:2px;background:#e6e6e6;"></div>
<div class="r" style="left:967.5px;top:711.2px;width:37px;height:3px;background:#f4f4f4;"></div>
<div class="r" style="left:973.5px;top:733.4px;width:25px;height:2px;background:#e6e6e6;"></div>
<div class="r" style="left:955.0px;top:659.5px;width:62px;height:20.5px;border-radius:10px;background:#1592d9;"></div>
<div class="r" style="left:1097px;top:582px;width:3px;height:176px;background:#f4f4f4;"></div>
<div class="r" style="left:1085.8px;top:603.7px;width:25px;height:2px;background:#e6e6e6;"></div>
<div class="r" style="left:1079.8px;top:624.9px;width:37px;height:3px;background:#f4f4f4;"></div>
<div class="r" style="left:1085.8px;top:647.0px;width:25px;height:2px;background:#e6e6e6;"></div>
<div class="r" style="left:1085.8px;top:690.3px;width:25px;height:2px;background:#e6e6e6;"></div>
<div class="r" style="left:1079.8px;top:711.2px;width:37px;height:3px;background:#f4f4f4;"></div>
<div class="r" style="left:1085.8px;top:733.4px;width:25px;height:2px;background:#e6e6e6;"></div>
<div class="r" style="left:1067.3px;top:659.5px;width:62px;height:20.5px;border-radius:10px;background:#1592d9;"></div>
<div class="r" style="left:1209px;top:582px;width:3px;height:176px;background:#f4f4f4;"></div>
<div class="r" style="left:1198.2px;top:603.7px;width:25px;height:2px;background:#e6e6e6;"></div>
<div class="r" style="left:1192.2px;top:624.9px;width:37px;height:3px;background:#f4f4f4;"></div>
<div class="r" style="left:1198.2px;top:647.0px;width:25px;height:2px;background:#e6e6e6;"></div>
<div class="r" style="left:1198.2px;top:690.3px;width:25px;height:2px;background:#e6e6e6;"></div>
<div class="r" style="left:1192.2px;top:711.2px;width:37px;height:3px;background:#f4f4f4;"></div>
<div class="r" style="left:1198.2px;top:733.4px;width:25px;height:2px;background:#e6e6e6;"></div>
<div class="r" style="left:1179.7px;top:659.5px;width:62px;height:20.5px;border-radius:10px;background:#1592d9;"></div>
<div class="r" style="left:1322px;top:582px;width:3px;height:176px;background:#f4f4f4;"></div>
<div class="r" style="left:1310.6px;top:603.7px;width:25px;height:2px;background:#e6e6e6;"></div>
<div class="r" style="left:1304.6px;top:624.9px;width:37px;height:3px;background:#f4f4f4;"></div>
<div class="r" style="left:1310.6px;top:647.0px;width:25px;height:2px;background:#e6e6e6;"></div>
<div class="r" style="left:1310.6px;top:690.3px;width:25px;height:2px;background:#e6e6e6;"></div>
<div class="r" style="left:1304.6px;top:711.2px;width:37px;height:3px;background:#f4f4f4;"></div>
<div class="r" style="left:1310.6px;top:733.4px;width:25px;height:2px;background:#e6e6e6;"></div>
<div class="r" style="left:1292.1px;top:659.5px;width:62px;height:20.5px;border-radius:10px;background:#1592d9;"></div>
<div class="r" style="left:1434px;top:582px;width:3px;height:176px;background:#f4f4f4;"></div>
<div class="r" style="left:1423.0px;top:603.7px;width:25px;height:2px;background:#e6e6e6;"></div>
<div class="r" style="left:1417.0px;top:624.9px;width:37px;height:3px;background:#f4f4f4;"></div>
<div class="r" style="left:1423.0px;top:647.0px;width:25px;height:2px;background:#e6e6e6;"></div>
<div class="r" style="left:1423.0px;top:690.3px;width:25px;height:2px;background:#e6e6e6;"></div>
<div class="r" style="left:1417.0px;top:711.2px;width:37px;height:3px;background:#f4f4f4;"></div>
<div class="r" style="left:1423.0px;top:733.4px;width:25px;height:2px;background:#e6e6e6;"></div>
<div class="r" style="left:1404.5px;top:659.5px;width:62px;height:20.5px;border-radius:10px;background:#1592d9;"></div>
<div class="t" style="left:71.8px;top:658.3px;width:100px;text-align:center;font-size:20px;line-height:20px;font-weight:700;color:#f4f4f4;transform:rotate(-90deg);transform-origin:50px 10px;-webkit-text-stroke:0.6px #f4f4f4;">Sensitivity</div>
<div class="r" style="left:59px;top:796px;width:216px;height:51px;background:#1b1b1c;"></div>
<svg style="left:86.8px;top:812.8px" width="22.2" height="19" viewBox="0 0 22.2 19"><path d="M3 0 H8 V10 H11 L5.5 19 L0 10 H3 Z" fill="#f4f4f4"/><path d="M16.6 0 L22.2 9 H19.3 V19 H14 V9 H11 Z" fill="#f4f4f4"/></svg>
<div class="t b" style="left:117.7px;top:814.4px;font-size:17.2px;line-height:17.2px;font-weight:700;color:#f0f0f0;letter-spacing:0px;">Min/Max Tuning</div>
<div class="r" style="left:314px;top:812px;width:5px;height:20px;background:#f4f4f4;"></div>
<div class="r" style="left:322.7px;top:817px;width:5.0px;height:11px;background:#f4f4f4;"></div>
<div class="r" style="left:331px;top:812px;width:5px;height:20px;background:#f4f4f4;"></div>
<div class="t b" style="left:346.0px;top:814.4px;font-size:17.2px;line-height:17.2px;font-weight:700;color:#f0f0f0;letter-spacing:0px;">Axis Limiting</div>
<div class="r" style="left:514px;top:809px;width:25.8px;height:25.8px;border-radius:50%;background:#f6f6f6;"></div>
<svg style="left:514px;top:809px" width="26" height="26" viewBox="0 0 26 26"><path d="M8.5 20.5 V8.5 H14 C17.5 8.5 19.2 10.3 19.2 13 C19.2 15.7 17.5 17.5 14 17.5 H11.5 V20.5 Z" fill="none" stroke="#1e1e20" stroke-width="3.4" stroke-linejoin="round"/></svg>
<div class="t b" style="left:549.0px;top:814.4px;font-size:17.2px;line-height:17.2px;font-weight:700;color:#f0f0f0;letter-spacing:0px;">Parking Location</div>
<svg style="left:737px;top:809px" width="26" height="26" viewBox="0 0 26 26"><path d="M8.30 0.70 L13.81 8.47 L21.60 3.00 L17.10 10.70 L23.10 10.90 L17.80 13.24 L22.70 15.60 L17.23 15.46 L25.50 24.60 L14.70 17.69 L11.80 24.20 L10.46 17.28 L1.20 20.70 L8.23 13.77 L0.40 8.90 L9.55 9.86 Z" fill="#f6f6f6"/></svg>
<div class="t b" style="left:770.0px;top:814.4px;font-size:17.2px;line-height:17.2px;font-weight:700;color:#f0f0f0;letter-spacing:0px;">Crash Detection</div>
<div class="t b" style="left:1036.0px;top:812.3px;font-size:18px;line-height:18px;font-weight:700;color:#f0f0f0;letter-spacing:0px;">Profile Intensity</div>
<div class="r" style="left:1196.5px;top:822px;width:250.5px;height:3.5px;background:#1a8fd6;"></div>
<div class="r" style="left:1435px;top:809px;width:25px;height:25px;border-radius:50%;background:#d97a10;"></div>
<div class="r" style="left:1473.3px;top:807px;width:53.7px;height:25.4px;border:2px solid #5a5a5f;background:#2a2a2d;"></div>
<div class="t b" style="left:1302.7px;width:400px;text-align:center;top:810.1px;font-size:24px;line-height:24px;font-weight:700;color:#f4f4f4;letter-spacing:-0.3px;">100</div>
</body></html>
